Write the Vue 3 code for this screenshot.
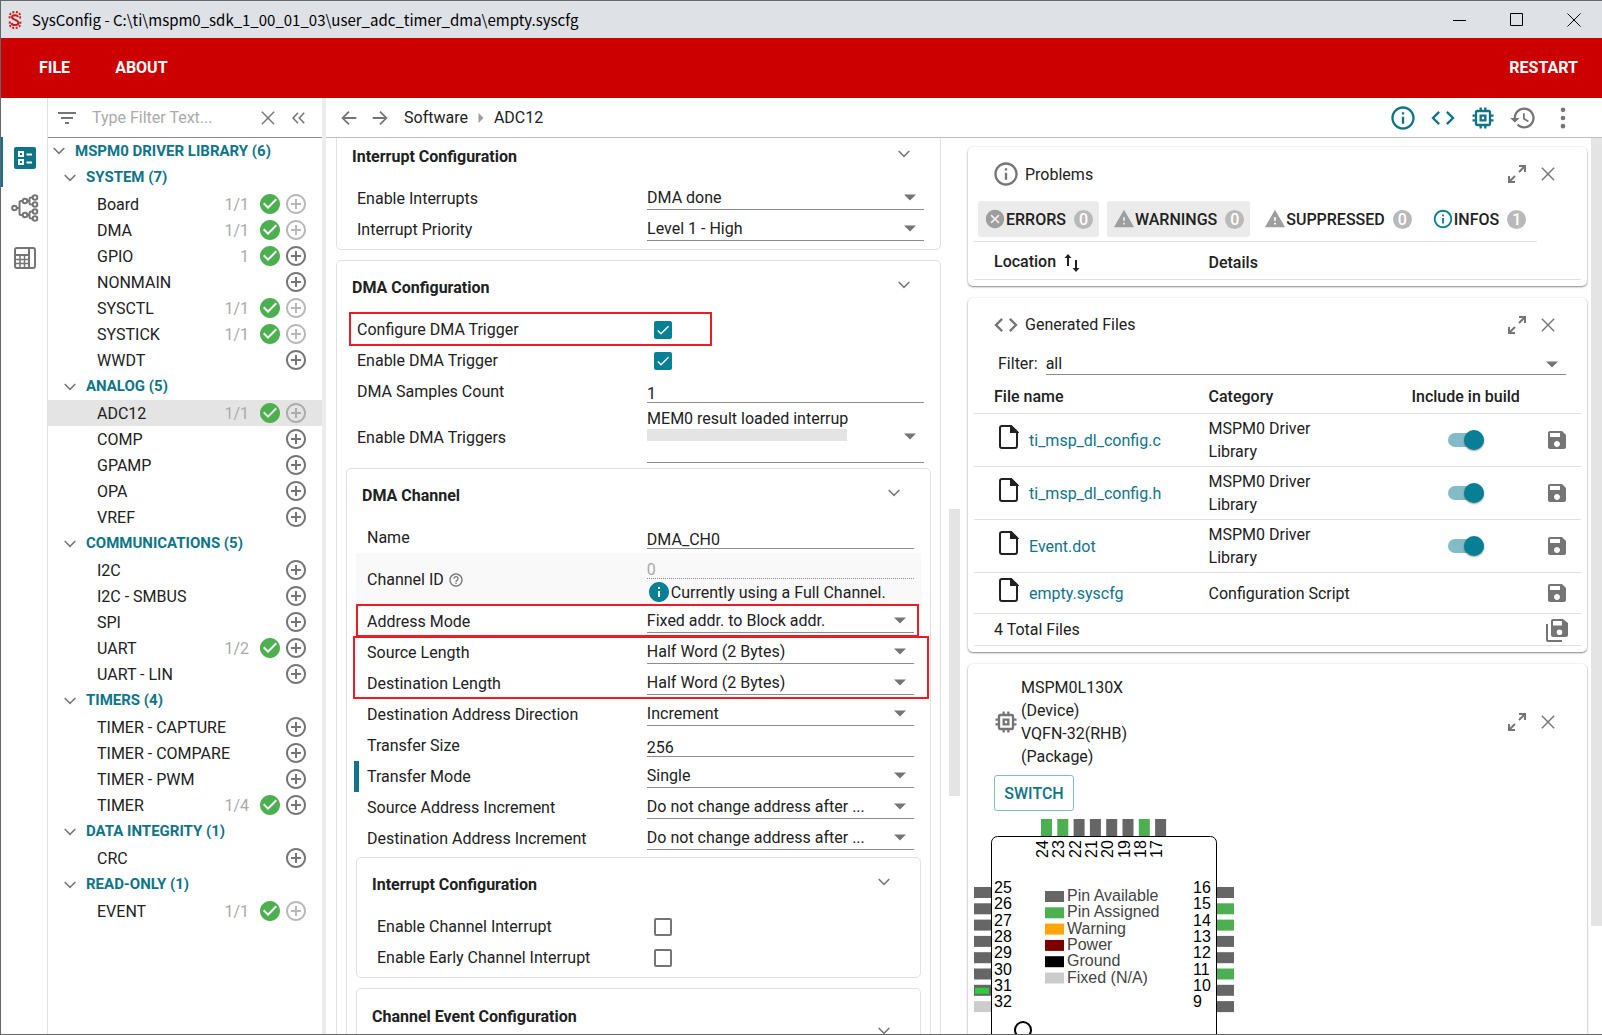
<script setup>
import { h, ref } from 'vue'

const icons = {
  info: 'M11 7h2v2h-2zm0 4h2v6h-2zm1-9C6.48 2 2 6.48 2 12s4.48 10 10 10 10-4.48 10-10S17.52 2 12 2zm0 18c-4.41 0-8-3.59-8-8s3.59-8 8-8 8 3.59 8 8-3.59 8-8 8z',
  infoFilled: 'M12 2C6.48 2 2 6.48 2 12s4.48 10 10 10 10-4.48 10-10S17.52 2 12 2zm1 15h-2v-6h2v6zm0-8h-2V7h2v2z',
  code: 'M9.4 16.6 4.8 12l4.6-4.6L8 6l-6 6 6 6 1.4-1.4zm5.2 0 4.6-4.6-4.6-4.6L16 6l6 6-6 6-1.4-1.4z',
  chip: 'M15 9H9v6h6V9zm-2 4h-2v-2h2v2zm8-2V9h-2V7c0-1.1-.9-2-2-2h-2V3h-2v2h-2V3H9v2H7c-1.1 0-2 .9-2 2v2H3v2h2v2H3v2h2v2c0 1.1.9 2 2 2h2v2h2v-2h2v2h2v-2h2c1.1 0 2-.9 2-2v-2h2v-2h-2v-2h2zm-4 6H7V7h10v10z',
  history: 'M13 3c-4.97 0-9 4.03-9 9H1l3.89 3.89.07.14L9 12H6c0-3.87 3.13-7 7-7s7 3.13 7 7-3.13 7-7 7c-1.93 0-3.68-.79-4.94-2.06l-1.42 1.42C8.27 19.99 10.51 21 13 21c4.97 0 9-4.03 9-9s-4.03-9-9-9zm-1 5v5l4.28 2.54.72-1.21-3.5-2.08V8H12z',
  more: 'M12 7a2 2 0 1 0 0-4 2 2 0 0 0 0 4zm0 7a2 2 0 1 0 0-4 2 2 0 0 0 0 4zm0 7a2 2 0 1 0 0-4 2 2 0 0 0 0 4z',
  filter: 'M10 18h4v-2h-4v2zM3 6v2h18V6H3zm3 7h12v-2H6v2z',
  done: 'M12 2C6.48 2 2 6.48 2 12s4.48 10 10 10 10-4.48 10-10S17.52 2 12 2zm-2 15-5-5 1.41-1.41L10 14.17l7.59-7.59L19 8l-9 9z',
  add: 'M13 7h-2v4H7v2h4v4h2v-4h4v-2h-4V7zm-1-5C6.48 2 2 6.48 2 12s4.48 10 10 10 10-4.48 10-10S17.52 2 12 2zm0 18c-4.41 0-8-3.59-8-8s3.59-8 8-8 8 3.59 8 8-3.59 8-8 8z',
  save: 'M17 3H5c-1.11 0-2 .9-2 2v14c0 1.1.89 2 2 2h14c1.1 0 2-.9 2-2V7l-4-4zm-5 16c-1.66 0-3-1.34-3-3s1.34-3 3-3 3 1.34 3 3-1.34 3-3 3zm3-10H5V5h10v4z',
  saveAll: 'M18 1H8c-1.1 0-2 .9-2 2v14c0 1.1.9 2 2 2h13c1.1 0 2-.9 2-2V5l-5-4zm-3.5 16a2.8 2.8 0 1 1 0-5.6 2.8 2.8 0 0 1 0 5.6zM17 7.500H8V3h9v4.500zM1 6h2v16h14v2H3c-1.100 0-2-.900-2-2z',
  caret: 'M6 9.500l6 6 6-6z',
  caretRight: 'M9 6l6 6-6 6z',
  close: 'M20 5.200 18.800 4 12 10.800 5.200 4 4 5.200 10.800 12 4 18.800 5.200 20 12 13.200 18.800 20 20 18.800 13.200 12z',
  collapse: 'M11.500 6.300 10.200 5 3.500 12l6.700 7 1.300-1.300L6.100 12zm7.500 0L17.700 5 11 12l6.700 7 1.300-1.300L13.600 12z',
  chevron: 'M6.300 7.800 12 13.500l5.700-5.700L19 9.100l-7 7-7-7z',
  back: 'M20 11H7.400l5.300-5.300L11.300 4.300 3.600 12l7.700 7.700 1.400-1.400L7.400 13H20z',
  forward: 'M4 11h12.600l-5.300-5.300 1.400-1.400 7.700 7.700-7.700 7.700-1.400-1.400 5.300-5.300H4z',
  expand: 'M14 3h7v7h-2V6.400l-4.300 4.300-1.400-1.400L17.600 5H14zM3 14h2v3.600l4.300-4.300 1.400 1.400L6.400 19H10v2H3z',
  error: 'M12 2C6.470 2 2 6.470 2 12s4.470 10 10 10 10-4.470 10-10S17.530 2 12 2zm5 13.590L15.590 17 12 13.410 8.410 17 7 15.590 10.590 12 7 8.410 8.410 7 12 10.590 15.590 7 17 8.410 13.410 12 17 15.590z',
  warning: 'M1 21h22L12 2 1 21zm12-3h-2v-2h2v2zm0-4h-2v-4h2v4z',
  help: 'M11 18h2v-2h-2v2zm1-16C6.480 2 2 6.480 2 12s4.480 10 10 10 10-4.480 10-10S17.520 2 12 2zm0 18c-4.410 0-8-3.590-8-8s3.590-8 8-8 8 3.590 8 8-3.590 8-8 8zm0-14c-2.210 0-4 1.790-4 4h2c0-1.100.900-2 2-2s2 .900 2 2c0 2-3 1.750-3 5h2c0-2.250 3-2.500 3-5 0-2.210-1.790-4-4-4z',
  sort: 'M8 3 4.500 7H7v8h2V7h2.500zM16 21l3.500-4H17V9h-2v8h-2.500z',
  tick: 'M9 16.200 4.800 12l-1.400 1.400L9 19 21 7l-1.400-1.400z',
}

const Icon = (props) =>
  h('svg', { width: props.size, height: props.size, viewBox: '0 0 24 24', fill: 'currentColor', 'aria-hidden': 'true' }, [
    h('path', { d: icons[props.name] }),
  ])
Icon.props = { name: String, size: { type: Number, default: 24 } }

/* One labelled setting: a drop-down, a text box or a tick box. */
const Field = ({ row }) => {
  let control
  if (row.kind === 'select') {
    control = h('div', { class: 'control' }, [
      h('select', { id: row.id }, [h('option', row.value)]),
      h(Icon, { name: 'caret', class: 'caret' }),
    ])
  } else if (row.kind === 'text') {
    control = h('div', { class: 'control' }, [h('input', { id: row.id, type: 'text', value: row.value })])
  } else {
    control = h('div', { class: 'tick' }, [
      h('input', { id: row.id, type: 'checkbox', checked: row.value }),
      row.value ? h(Icon, { name: 'tick', size: 16, class: 'tick-mark' }) : null,
    ])
  }
  return h('div', { class: 'field' }, [h('label', { for: row.id }, row.label), control])
}
Field.props = { row: Object }

const tree = [
  { name: 'SYSTEM (7)', items: [['Board', '1/1', true], ['DMA', '1/1', true], ['GPIO', '1'], ['NONMAIN'], ['SYSCTL', '1/1', true], ['SYSTICK', '1/1', true], ['WWDT']] },
  { name: 'ANALOG (5)', items: [['ADC12', '1/1', true], ['COMP'], ['GPAMP'], ['OPA'], ['VREF']] },
  { name: 'COMMUNICATIONS (5)', items: [['I2C'], ['I2C - SMBUS'], ['SPI'], ['UART', '1/2'], ['UART - LIN']] },
  { name: 'TIMERS (4)', items: [['TIMER - CAPTURE'], ['TIMER - COMPARE'], ['TIMER - PWM'], ['TIMER', '1/4']] },
  { name: 'DATA INTEGRITY (1)', items: [['CRC']] },
  { name: 'READ-ONLY (1)', items: [['EVENT', '1/1', true]] },
]
const selected = ref('ADC12')

const select = (id, label, value) => ({ kind: 'select', id, label, value })
const text = (id, label, value) => ({ kind: 'text', id, label, value })
const check = (id, label, value) => ({ kind: 'check', id, label, value })

const interruptRows = [select('ints', 'Enable Interrupts', 'DMA done'), select('prio', 'Interrupt Priority', 'Level 1 - High')]
const lengthRows = [
  select('srclen', 'Source Length', 'Half Word (2 Bytes)'),
  select('dstlen', 'Destination Length', 'Half Word (2 Bytes)'),
]
const incrementRows = [
  select('srcinc', 'Source Address Increment', 'Do not change address after ...'),
  select('dstinc', 'Destination Address Increment', 'Do not change address after ...'),
]
const channelInterruptRows = [
  check('chint', 'Enable Channel Interrupt', false),
  check('chearly', 'Enable Early Channel Interrupt', false),
]

const tabs = [
  { label: 'ERRORS', count: 0, icon: 'error', on: true },
  { label: 'WARNINGS', count: 0, icon: 'warning', on: true },
  { label: 'SUPPRESSED', count: 0, icon: 'warning' },
  { label: 'INFOS', count: 1, icon: 'info', teal: true },
]
const files = [
  { name: 'ti_msp_dl_config.c', category: 'MSPM0 Driver\nLibrary', build: true },
  { name: 'ti_msp_dl_config.h', category: 'MSPM0 Driver\nLibrary', build: true },
  { name: 'Event.dot', category: 'MSPM0 Driver\nLibrary', build: true },
  { name: 'empty.syscfg', category: 'Configuration Script', build: false },
]

const GREY = '#666666'
const GREEN = '#4caf50'
const PITCH = 16.3
const topPins = [24, 23, 22, 21, 20, 19, 18, 17].map((n, i) => ({ n, at: 67 + i * PITCH, fill: [24, 23, 18].includes(n) ? GREEN : GREY }))
const leftPins = [25, 26, 27, 28, 29, 30, 31, 32].map((n, i) => ({ n, at: 68 + i * PITCH, fill: n === 32 ? '#cccccc' : GREY }))
const rightPins = [16, 15, 14, 13, 12, 11, 10, 9].map((n, i) => ({ n, at: 68 + i * PITCH, fill: [15, 14, 11].includes(n) ? GREEN : GREY }))
const legend = [
  ['Pin Available', GREY],
  ['Pin Assigned', GREEN],
  ['Warning', '#ffa50a'],
  ['Power', '#7a0000'],
  ['Ground', '#000000'],
  ['Fixed (N/A)', '#cccccc'],
].map(([label, fill], i) => ({ label, fill, at: 72 + i * PITCH }))
</script>

<template>
  <div class="window">
    <header class="titlebar">
      <svg class="logo" width="16" height="20" viewBox="0 0 16 20" fill="none" stroke="#cc1a1a">
        <path d="M11 7C10.500 4.500 5 4.500 5 7.300c0 3 6.500 2.200 6.500 5.400 0 3-6.500 3-7 .3" stroke-width="2" />
        <path d="M13 8.500c1-5-1.500-6.500-5-6.500S1.500 4 3 9M3 11.500c-1 5 1.500 6.500 5 6.500s6.500-2 5-7" stroke-width="2" stroke-dasharray="2 1.500" />
      </svg>
      <h1>SysConfig - C:\ti\mspm0_sdk_1_00_01_03\user_adc_timer_dma\empty.syscfg</h1>
      <button type="button" aria-label="Minimize"><svg width="14" height="14" stroke="#000"><path d="M0 7.500h13" /></svg></button>
      <button type="button" aria-label="Maximize"><svg width="14" height="14" stroke="#000" fill="none"><path d="M.5.5h12v12H.5z" /></svg></button>
      <button type="button" aria-label="Close window"><svg width="14" height="14" stroke="#000"><path d="M.5.5l13 13M13.500.5l-13 13" /></svg></button>
    </header>

    <nav class="menubar">
      <button type="button">FILE</button>
      <button type="button">ABOUT</button>
      <button type="button" class="restart">RESTART</button>
    </nav>

    <div class="body">
      <nav class="rail">
        <button type="button" class="active" aria-label="Software">
          <svg width="22" height="22" viewBox="0 0 22 22" fill="none" stroke="#fff" stroke-width="2">
            <rect width="22" height="22" rx="2" fill="#0f7488" stroke="none" />
            <path d="M5 5h4v4H5zM5 13h4v4H5zM12.500 7.500H18M12.500 15.500H18" />
          </svg>
        </button>
        <button type="button" aria-label="Clock tree">
          <svg width="28" height="28" viewBox="0 0 28 28" fill="none" stroke="currentColor" stroke-width="2">
            <circle cx="3.500" cy="14" r="2.300" /><circle cx="14" cy="7" r="2.300" /><circle cx="14" cy="21" r="2.300" />
            <circle cx="24" cy="3.500" r="2.300" /><circle cx="24" cy="10.500" r="2.300" /><circle cx="24" cy="17.500" r="2.300" /><circle cx="24" cy="24.500" r="2.300" />
            <path d="M6 14h3M11.500 7H10q-1.500 0-1.500 1.500v11Q8.500 21 10 21h1.500M21.500 3.500H20q-1.500 0-1.500 1.500v4q0 1.500 1.500 1.500h1.500M16 7h2.500M21.500 17.500H20q-1.500 0-1.500 1.500v4q0 1.500 1.500 1.500h1.500M16 21h2.500" />
          </svg>
        </button>
        <button type="button" aria-label="Resources">
          <svg width="22" height="22" viewBox="0 0 22 22" fill="none" stroke="currentColor" stroke-width="2">
            <rect x="1" y="1" width="20" height="20" rx="2" />
            <path d="M15 1v20M1 8h14" /><path d="M1 12.500h14M1 16.500h14M6 8v13M10.500 8v13" stroke-width="1.500" />
          </svg>
        </button>
      </nav>

      <aside class="sidebar">
        <div class="filterbar">
          <Icon name="filter" />
          <input type="text" aria-label="Filter" placeholder="Type Filter Text..." />
          <button type="button" aria-label="Clear filter"><Icon name="close" :size="20" /></button>
          <button type="button" aria-label="Collapse"><Icon name="collapse" :size="20" /></button>
        </div>
        <div class="tree">
          <h2 class="root"><Icon name="chevron" :size="20" />MSPM0 DRIVER LIBRARY (6)</h2>
          <section v-for="group in tree" :key="group.name">
            <h3><Icon name="chevron" :size="20" />{{ group.name }}</h3>
            <ul>
              <li v-for="[name, count, full] in group.items" :key="name" :class="{ selected: name === selected }">
                <a href="#" @click.prevent="selected = name">{{ name }}</a>
                <span v-if="count" class="count">{{ count }}</span>
                <Icon v-if="count" name="done" class="done" />
                <button type="button" :disabled="full" :aria-label="'Add ' + name"><Icon name="add" /></button>
              </li>
            </ul>
          </section>
        </div>
      </aside>

      <main class="main">
        <div class="toolbar">
          <button type="button" aria-label="Back"><Icon name="back" :size="22" /></button>
          <button type="button" aria-label="Forward"><Icon name="forward" :size="22" /></button>
          <a href="#">Software</a>
          <Icon name="caretRight" :size="20" class="crumb" />
          <span>ADC12</span>
          <div class="tools">
            <button type="button" class="teal" aria-label="Problems"><Icon name="info" :size="28" /></button>
            <button type="button" class="teal" aria-label="Generated files"><Icon name="code" :size="28" /></button>
            <button type="button" class="teal" aria-label="Device"><Icon name="chip" :size="28" /></button>
            <button type="button" aria-label="History"><Icon name="history" :size="28" /></button>
            <button type="button" aria-label="More"><Icon name="more" :size="28" /></button>
          </div>
        </div>

        <div class="panes">
          <div class="pane form">
            <div class="form-scroll">
              <section class="card">
                <header><h2>Interrupt Configuration</h2><button type="button" aria-label="Fold"><Icon name="chevron" :size="20" /></button></header>
                <Field v-for="row in interruptRows" :key="row.id" :row="row" />
              </section>

              <section class="card">
                <header><h2>DMA Configuration</h2><button type="button" aria-label="Fold"><Icon name="chevron" :size="20" /></button></header>
                <div class="marked">
                  <Field :row="check('cfgtrig', 'Configure DMA Trigger', true)" />
                  <span class="mark mark-trigger"></span>
                </div>
                <Field :row="check('entrig', 'Enable DMA Trigger', true)" />
                <Field :row="text('samples', 'DMA Samples Count', '1')" />
                <div class="field triggers">
                  <label for="triggers">Enable DMA Triggers</label>
                  <div class="control">
                    <select id="triggers"><option>MEM0 result loaded interrup</option></select>
                    <div class="redacted"></div>
                    <Icon name="caret" class="caret" />
                  </div>
                </div>

                <section class="card">
                  <header><h2>DMA Channel</h2><button type="button" aria-label="Fold"><Icon name="chevron" :size="20" /></button></header>
                  <Field :row="text('chname', 'Name', 'DMA_CH0')" />
                  <div class="field channel">
                    <label for="chid">Channel ID <Icon name="help" :size="16" /></label>
                    <div>
                      <input id="chid" type="text" value="0" disabled />
                      <p><Icon name="infoFilled" />Currently using a Full Channel.</p>
                    </div>
                  </div>
                  <div class="marked">
                    <Field :row="select('addr', 'Address Mode', 'Fixed addr. to Block addr.')" />
                    <span class="mark mark-address"></span>
                  </div>
                  <div class="marked">
                    <Field v-for="row in lengthRows" :key="row.id" :row="row" />
                    <span class="mark mark-length"></span>
                  </div>
                  <Field :row="select('dir', 'Destination Address Direction', 'Increment')" />
                  <Field :row="text('size', 'Transfer Size', '256')" />
                  <Field class="changed" :row="select('mode', 'Transfer Mode', 'Single')" />
                  <Field v-for="row in incrementRows" :key="row.id" :row="row" />

                  <section class="card inner">
                    <header><h2>Interrupt Configuration</h2><button type="button" aria-label="Fold"><Icon name="chevron" :size="20" /></button></header>
                    <Field v-for="row in channelInterruptRows" :key="row.id" :row="row" />
                  </section>
                  <section class="card">
                    <header class="tall"><h2>Channel Event Configuration</h2><button type="button" aria-label="Fold"><Icon name="chevron" :size="20" /></button></header>
                  </section>
                </section>
              </section>
            </div>
            <div class="form-bar"><span></span></div>
          </div>

          <div class="pane side">
            <div class="side-scroll">
              <section class="panel problems">
                <header>
                  <Icon name="info" :size="28" /><h2>Problems</h2>
                  <button type="button" aria-label="Expand"><Icon name="expand" /></button>
                  <button type="button" aria-label="Close"><Icon name="close" :size="20" /></button>
                </header>
                <div class="tabs">
                  <button v-for="tab in tabs" :key="tab.label" type="button" :class="{ on: tab.on, infos: tab.teal }">
                    <Icon :name="tab.icon" :size="22" />{{ tab.label }}<b>{{ tab.count }}</b>
                  </button>
                </div>
                <table>
                  <thead><tr><th class="c-name">Location <Icon name="sort" /></th><th>Details</th></tr></thead>
                </table>
              </section>

              <section class="panel files">
                <header>
                  <Icon name="code" :size="28" /><h2>Generated Files</h2>
                  <button type="button" aria-label="Expand"><Icon name="expand" /></button>
                  <button type="button" aria-label="Close"><Icon name="close" :size="20" /></button>
                </header>
                <div class="filter">
                  <label for="filefilter">Filter:</label>
                  <div class="control">
                    <select id="filefilter"><option>all</option></select>
                    <Icon name="caret" class="caret" />
                  </div>
                </div>
                <table>
                  <thead>
                    <tr><th class="c-name">File name</th><th class="c-cat">Category</th><th class="c-build">Include in build</th><th class="c-save"></th></tr>
                  </thead>
                  <tbody>
                    <tr v-for="file in files" :key="file.name">
                      <td>
                        <a href="#">
                          <svg width="20" height="24" viewBox="0 0 20 24" fill="none" stroke="#212121" stroke-width="2"><path d="M3 1h9l6 6v14q0 2-2 2H3q-2 0-2-2V3q0-2 2-2z" /><path d="M12 1v6h6z" fill="#212121" /></svg>
                          {{ file.name }}
                        </a>
                      </td>
                      <td class="category">{{ file.category }}</td>
                      <td class="c-build"><input v-if="file.build" type="checkbox" class="toggle" checked :aria-label="'Include ' + file.name" /></td>
                      <td class="c-save"><button type="button" aria-label="Save"><Icon name="save" /></button></td>
                    </tr>
                  </tbody>
                  <tfoot>
                    <tr><td colspan="3">4 Total Files</td><td class="c-save"><button type="button" aria-label="Save all"><Icon name="saveAll" /></button></td></tr>
                  </tfoot>
                </table>
              </section>

              <section class="panel device">
                <header>
                  <Icon name="chip" :size="28" />
                  <h2>MSPM0L130X<br />(Device)<br />VQFN-32(RHB)<br />(Package)</h2>
                  <button type="button" aria-label="Expand"><Icon name="expand" /></button>
                  <button type="button" aria-label="Close"><Icon name="close" :size="20" /></button>
                </header>
                <button type="button" class="switch">SWITCH</button>
                <svg class="package" width="264" height="280" viewBox="0 0 264 280" font-size="16">
                  <rect x="17.5" y="17.5" width="225" height="246" rx="6" fill="#fff" stroke="#000" />
                  <circle cx="49" cy="211" r="8" fill="none" stroke="#000" stroke-width="2" />
                  <g v-for="pin in topPins" :key="pin.n">
                    <rect :x="pin.at" y="0" width="11" height="17" :fill="pin.fill" />
                    <text :transform="`translate(${pin.at + 7} 39) rotate(-90)`">{{ pin.n }}</text>
                  </g>
                  <g v-for="pin in leftPins" :key="pin.n">
                    <rect x="0" :y="pin.at" width="17" height="11" :fill="pin.fill" />
                    <rect v-if="pin.n === 31" x="1" :y="pin.at + 3" width="14" height="6" fill="#2ecc40" />
                    <text x="20" :y="pin.at + 6">{{ pin.n }}</text>
                  </g>
                  <g v-for="pin in rightPins" :key="pin.n">
                    <rect x="243" :y="pin.at" width="17" height="11" :fill="pin.fill" />
                    <text x="219" :y="pin.at + 6">{{ pin.n }}</text>
                  </g>
                  <g v-for="item in legend" :key="item.label">
                    <rect x="71" :y="item.at" width="19" height="11" :fill="item.fill" />
                    <text x="93" :y="item.at + 10" fill="#444">{{ item.label }}</text>
                  </g>
                </svg>
              </section>
            </div>
            <div class="side-bar"><span></span></div>
          </div>
        </div>
      </main>
    </div>
  </div>
</template>

<style>
body {
  margin: 0;
  overflow: hidden;
}
</style>

<style scoped>
.window {
  --teal: #0f7488;
  --line: #e0e0e0;
  --grey: #757575;
  box-sizing: border-box;
  height: 100vh;
  display: flex;
  flex-direction: column;
  overflow: hidden;
  border: solid #666;
  border-width: 1px 0 1px 1px;
  font: 16px/23px Roboto, sans-serif;
  color: #212121;
  background: #fff;
}
.window *,
.window :deep(*) {
  box-sizing: border-box;
}
button {
  display: flex;
  align-items: center;
  justify-content: center;
  padding: 0;
  border: 0;
  background: none;
  font: inherit;
  color: var(--grey);
}
a {
  color: inherit;
  text-decoration: none;
}
h1, h2, h3, p, ul {
  margin: 0;
  padding: 0;
  font: inherit;
  list-style: none;
}
svg,
:deep(svg) {
  flex: none;
  display: block;
}

.titlebar {
  flex: none;
  display: flex;
  align-items: center;
  height: 37px;
  padding-left: 6px;
  background: #dee1e6;
}
.titlebar h1 {
  flex: 1;
  padding-left: 9px;
  font: 15px/23px "Noto Sans CJK SC", "Noto Sans", sans-serif;
  color: #000;
}
.titlebar button {
  width: 57px;
  height: 100%;
}
.menubar {
  flex: none;
  display: flex;
  gap: 45px;
  height: 60px;
  padding: 0 24px 2px 38px;
  background: #c00;
}
.menubar button {
  font-weight: 700;
  color: #fff;
}
.menubar .restart {
  margin-left: auto;
}

.body {
  flex: 1;
  min-height: 0;
  display: flex;
}
.rail {
  flex: none;
  width: 47px;
  padding-top: 39px;
  border-right: 1px solid var(--line);
}
.rail button {
  width: 100%;
  height: 50px;
  padding: 0 0 8px 2px;
}
.rail .active {
  border-left: 2px solid var(--teal);
  padding-left: 0;
}

.sidebar {
  flex: none;
  width: 274px;
}
.filterbar {
  display: flex;
  align-items: center;
  height: 40px;
  padding: 0 13px 0 7px;
  border-bottom: 1px solid #8c8c8c;
  color: var(--grey);
}
.filterbar input {
  flex: 1;
  min-width: 0;
  padding: 0 0 0 13px;
  border: 0;
  outline: 0;
  font: inherit;
}
.filterbar input::placeholder {
  color: #aaa;
}
.filterbar button + button {
  margin-left: 11px;
}
.tree h2,
.tree h3 {
  display: flex;
  align-items: center;
  gap: 6px;
  height: 27px;
  font-size: 15px;
  font-weight: 700;
  color: var(--teal);
}
.tree h2 {
  height: 26px;
  padding-left: 1px;
}
.tree h3 {
  padding-left: 12px;
}
.tree h2 svg,
.tree h3 svg {
  color: var(--grey);
}
.tree li {
  display: flex;
  align-items: center;
  height: 26px;
  padding: 0 14px 0 49px;
}
.tree li.selected {
  background: #e4e4e4;
}
.tree a {
  flex: 1;
}
.count {
  color: #aaa;
}
.done {
  margin: 0 2px 0 9px;
  color: #4caf50;
}
.tree button:disabled {
  opacity: 0.5;
}

.main {
  flex: 1;
  min-width: 0;
  display: flex;
  flex-direction: column;
  border-left: 4px solid #ececec;
}
.toolbar {
  flex: none;
  display: flex;
  align-items: center;
  height: 40px;
  padding: 0 25px 0 12px;
  border-bottom: 1px solid #bdbdbd;
}
.toolbar button + button {
  margin-left: 9px;
}
.toolbar a {
  margin-left: 13px;
}
.crumb {
  margin: 0 3px;
  color: #9e9e9e;
}
.tools {
  display: flex;
  align-items: center;
  margin-left: auto;
}
.tools button + button {
  margin-left: 12px;
}
.teal {
  color: var(--teal);
}
.panes {
  flex: 1;
  min-height: 0;
  display: flex;
}
.pane {
  flex: 1;
  min-width: 0;
  display: flex;
  overflow: hidden;
}
.form-scroll {
  flex: 1;
  min-width: 0;
  padding: 0 8px 0 10px;
  margin-top: -9px;
}
.form-bar {
  flex: none;
  width: 15px;
  padding-right: 4px;
}
.form-bar span {
  display: block;
  height: 32%;
  margin-top: 371px;
  background: #e4e4e4;
}
.side-bar {
  flex: none;
  width: 11px;
}
.side-bar span {
  display: block;
  height: 88%;
  background: #e4e4e4;
}

.card {
  padding: 0 9px 4px;
  border: 1px solid var(--line);
  border-radius: 5px;
}
.card + .card {
  margin-top: 10px;
}
.field + .card,
.marked + .card {
  margin-top: 1px;
}
.field + .card.inner {
  margin-top: 3px;
}
.card header {
  display: flex;
  align-items: center;
  justify-content: space-between;
  height: 53px;
  padding: 0 17px 0 6px;
}
.card header h2 {
  font-weight: 700;
}
.card header button {
  height: 48px;
  align-self: flex-start;
}
.card header.tall {
  height: 84px;
}
.card header.tall h2 {
  align-self: flex-start;
  padding-top: 16px;
}
.card header.tall button {
  height: 100%;
}
.form :deep(.field) {
  position: relative;
  display: grid;
  grid-template-columns: 22fr 21fr;
  min-height: 31px;
  padding: 0 7px 0 11px;
}
.form :deep(.field label) {
  display: flex;
  align-items: center;
  gap: 4px;
}
.form :deep(.field .control) {
  margin-top: 2px;
}
.window :deep(.control) {
  position: relative;
  height: 25px;
  border-bottom: 1px solid #8c8c8c;
}
.window :deep(select),
.form :deep(input[type='text']) {
  display: block;
  appearance: none;
  width: 100%;
  height: 24px;
  padding: 0;
  border: 0;
  outline: 0;
  background: none;
  font: inherit;
  color: inherit;
}
.form :deep(input[type='text']) {
  padding-top: 6px;
}
.window :deep(.caret) {
  position: absolute;
  right: 2px;
  top: 0;
  color: var(--grey);
  pointer-events: none;
}
.form :deep(.tick) {
  position: relative;
  display: flex;
  align-items: center;
  padding-left: 7px;
}
.form :deep(.tick input) {
  appearance: none;
  width: 18px;
  height: 18px;
  margin: 0;
  border: 2px solid var(--grey);
  border-radius: 2px;
}
.form :deep(.tick input:checked) {
  border-color: #077f94;
  background: #077f94;
}
.form :deep(.tick-mark) {
  position: absolute;
  left: 8px;
  color: #fff;
  pointer-events: none;
}
.form :deep(.changed)::before {
  content: '';
  position: absolute;
  left: -2px;
  width: 5px;
  height: 100%;
  background: var(--teal);
}
.form .triggers {
  min-height: 60px;
}
.form .triggers .control {
  height: 54px;
}
.redacted {
  width: 200px;
  height: 12px;
  max-width: 80%;
  background: #e4e4e4;
}
.form .triggers select {
  height: 20px;
  line-height: 20px;
}
.form .triggers .caret {
  top: 15px;
}
.form .channel {
  min-height: 53px;
  background: #f9f9f9;
}
.channel label svg {
  color: var(--grey);
}
.form .channel input[type='text'] {
  height: 26px;
  padding-top: 8px;
  border-bottom: 1px dotted #8c8c8c;
  color: #aaa;
}
.channel p {
  display: flex;
  align-items: center;
  height: 26px;
  white-space: nowrap;
}
.channel p svg {
  color: #077f94;
}
.marked {
  position: relative;
}
.mark {
  position: absolute;
  border: 2px solid #ed1c24;
  pointer-events: none;
}
.mark-trigger {
  inset: -2px 219px -1px 3px;
}
.mark-address {
  inset: -2px 2px 0 0;
}
.mark-length {
  inset: -1px -8px 0 -3px;
}

.side-scroll {
  flex: 1;
  min-width: 0;
  display: flex;
  flex-direction: column;
  gap: 12px;
  padding: 9px 4px 0;
}
.panel {
  flex: none;
  padding: 0 6px 6px;
  border-radius: 5px;
  box-shadow: 0 1px 2px rgba(0, 0, 0, 0.45), 0 0 3px rgba(0, 0, 0, 0.08);
}
.panel header {
  display: flex;
  align-items: center;
  height: 54px;
  padding: 0 23px 0 18px;
}
.panel header > svg {
  color: var(--grey);
}
.panel h2 {
  flex: 1;
  padding-left: 5px;
}
.panel header button + button {
  margin-left: 9px;
}
.tabs {
  display: flex;
  gap: 8px;
  width: 563px;
  max-width: 100%;
  height: 41px;
  padding: 0 4px 4px;
  border-bottom: 1px solid var(--line);
}
.tabs button {
  padding: 0 6px;
  border-radius: 3px;
  font-weight: 500;
  color: #212121;
}
.tabs .on {
  background: #ebebeb;
}
.tabs svg {
  color: #9e9e9e;
}
.tabs .infos svg {
  color: #077f94;
}
.tabs b {
  width: 19px;
  height: 19px;
  margin-left: 8px;
  border-radius: 50%;
  line-height: 19px;
  font-weight: 500;
  color: #fff;
  background: #b9b9b9;
}
table {
  width: 100%;
  table-layout: fixed;
  border-collapse: collapse;
}
th,
td {
  height: 41px;
  padding: 0 0 0 16px;
  border-bottom: 1px solid var(--line);
  text-align: left;
  font-weight: 400;
}
th {
  height: 34px;
  font-weight: 500;
}
.problems th {
  height: 37px;
  padding-top: 5px;
}
.c-name {
  width: 36%;
}
.c-cat {
  width: 34%;
}
th:first-child,
td:first-child {
  padding-left: 20px;
}
th svg {
  display: inline-block;
  vertical-align: middle;
}
tbody tr:not(:last-child) td {
  height: 53px;
}
tfoot td {
  height: 32px;
}
td a {
  display: flex;
  align-items: center;
  gap: 10px;
  padding-left: 5px;
  color: var(--teal);
}
td a svg {
  margin-bottom: 6px;
}
.category {
  white-space: pre-line;
}
.c-build {
  padding: 0;
  text-align: center;
}
.c-save {
  width: 8%;
  padding: 0;
}
.c-save button {
  width: 100%;
}
.toggle {
  appearance: none;
  position: relative;
  display: block;
  width: 36px;
  height: 14px;
  margin: 0 auto;
  border-radius: 7px;
  background: #83bcc8;
}
.toggle::before {
  content: '';
  position: absolute;
  top: -3px;
  right: 0;
  width: 20px;
  height: 20px;
  border-radius: 50%;
  background: #077f94;
  box-shadow: 0 1px 2px rgba(0, 0, 0, 0.4);
}
.filter {
  display: flex;
  align-items: flex-start;
  gap: 8px;
  height: 28px;
  padding: 0 15px 0 24px;
}
.filter .control {
  flex: 1;
  height: 23px;
}
.filter select {
  height: 22px;
}
.device header {
  height: auto;
  padding-top: 12px;
}
.device h2 {
  padding-left: 1px;
}
.switch {
  width: 80px;
  height: 36px;
  margin: 7px 0 8px 20px;
  border: 1px solid #83bcc8;
  border-radius: 3px;
  font-weight: 500;
  color: var(--teal);
}
.package {
  font-family: "Liberation Sans", Arial, sans-serif;
}
</style>
